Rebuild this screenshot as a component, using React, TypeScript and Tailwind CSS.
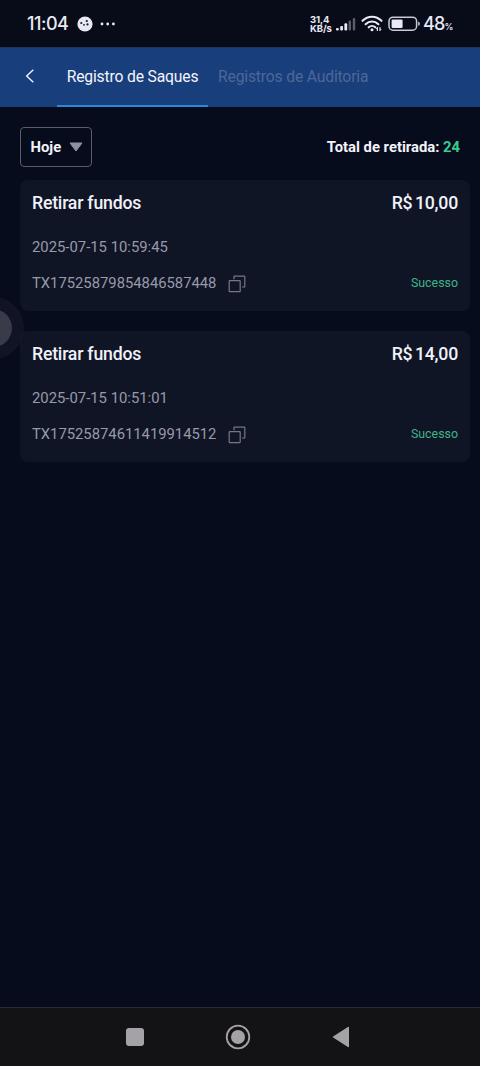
const withdrawals = [
  {
    id: "TX17525879854846587448",
    date: "2025-07-15 10:59:45",
    amount: "10,00",
    status: "Sucesso",
  },
  {
    id: "TX17525874611419914512",
    date: "2025-07-15 10:51:01",
    amount: "14,00",
    status: "Sucesso",
  },
];

function StatusBar() {
  return (
    <div className="flex h-[47px] items-center bg-[#080b18] pl-[27px] pr-[27px] font-['Inter',sans-serif] text-[#e9e9f4]">
      <span className="w-[50px] text-[18px] leading-none font-medium tracking-[-0.5px] whitespace-nowrap">
        11:04
      </span>
      <svg width="16" height="16" viewBox="0 0 16 16">
        <circle cx="8" cy="8" r="7.6" fill="#e9e9f4" />
        <g fill="#151725">
          <circle cx="4.3" cy="7" r="1.1" />
          <circle cx="9.8" cy="5" r="1.1" />
          <circle cx="7" cy="8.8" r="0.9" />
          <circle cx="10.5" cy="8.4" r="1.1" />
        </g>
      </svg>
      <svg className="ml-[6.5px]" width="16" height="4" viewBox="0 0 16 4" fill="#e9e9f4">
        <circle cx="2" cy="2" r="1.4" />
        <circle cx="7.7" cy="2" r="1.4" />
        <circle cx="13.4" cy="2" r="1.4" />
      </svg>
      <div className="ml-auto flex items-center">
        <div className="w-[25px] text-[9.5px] leading-[9px] font-bold tracking-[-0.1px] whitespace-nowrap">
          <div>31,4</div>
          <div>KB/s</div>
        </div>
        <svg width="21" height="14" viewBox="0 0 21 14" fill="#e9e9f4">
          <rect x="1" y="11" width="2.8" height="2.5" rx="1" />
          <rect x="5.2" y="9" width="2.8" height="4.5" rx="1" />
          <rect x="9.4" y="6.2" width="2.8" height="7.3" rx="1" />
          <rect x="13.6" y="3.5" width="2.4" height="10" rx="1" fill="#5b5d6b" />
          <rect x="17.8" y="1" width="2.4" height="12.5" rx="1" fill="#5b5d6b" />
        </svg>
        <svg
          className="ml-[5px]"
          width="22"
          height="17"
          viewBox="0 0 22 17"
          fill="none"
          stroke="#e9e9f4"
          strokeWidth="2.1"
          strokeLinecap="round"
        >
          <path d="M1.5 5.8C7 .3 15 .3 20.5 5.8" />
          <path d="M4.6 9.2c3.7-3.7 9.1-3.7 12.8 0" />
          <path d="M7.7 12.3c1.9-1.8 4.7-1.8 6.6 0" />
          <circle cx="11" cy="14.8" r="1.5" fill="#e9e9f4" stroke="none" />
          <path d="M16.4 12.7v2.8M19 12.5v2.8" strokeWidth="1.2" />
          <path d="M15.4 13.7l1-1M20 14.3l-1 1" strokeWidth="1" />
        </svg>
        <svg className="ml-[5px]" width="33" height="16" viewBox="0 0 33 16">
          <rect x="1" y="1.2" width="27.6" height="13" rx="4" fill="none" stroke="#c9cad6" strokeWidth="1.5" />
          <rect x="3.6" y="3.5" width="11" height="8.4" rx="1.2" fill="#e9e9f4" />
          <path d="M30.2 5.7q1.7 0 1.7 2t-1.7 2z" fill="#c9cad6" />
        </svg>
        <div className="ml-[2px] w-[30px] leading-none font-medium whitespace-nowrap">
          <span className="text-[18px] tracking-[-0.8px]">48</span>
          <span className="text-[9px]">%</span>
        </div>
      </div>
    </div>
  );
}

function Header() {
  return (
    <div className="flex h-[59px] bg-[#193e7c] text-[15.7px] tracking-[-0.17px] shadow-[0_-1px_0_#25315f]">
      <div className="flex w-[57px] items-center pb-[3px] pl-[25px]">
        <svg
          width="10"
          height="14"
          viewBox="0 0 10 14"
          fill="none"
          stroke="#f3f5fb"
          strokeWidth="1.4"
        >
          <path d="M8.3 .8 1.7 7l6.6 6.2" />
        </svg>
      </div>
      <div className="flex w-[151px] items-center justify-center border-b-2 border-[#2f86dc] whitespace-nowrap text-[#f3f5fb]">
        Registro de Saques
      </div>
      <div className="flex items-center pb-[2px] pl-[10px] whitespace-nowrap text-[#4e6797]">
        Registros de Auditoria
      </div>
    </div>
  );
}

function CopyIcon() {
  return (
    <svg
      className="mt-[2px]"
      width="18"
      height="18"
      viewBox="0 0 18 18"
      fill="none"
      stroke="#747786"
      strokeWidth="1.2"
      strokeLinejoin="round"
    >
      <rect x="1.2" y="5.6" width="11" height="11" rx="0.7" />
      <path d="M6 4.2V1.8q0-.6.6-.6H16.2q.6 0 .6.6v9.6q0 .6-.6.6H14" />
    </svg>
  );
}

export default function App() {
  return (
    <div className="relative flex h-[1066px] w-[480px] flex-col overflow-hidden bg-[#070c1d] font-['Roboto',sans-serif]">
      <StatusBar />
      <div className="h-px bg-[#04060d]" />
      <Header />

      <div className="flex-1 pt-5 pr-[10px] pl-5">
        <div className="flex h-10 items-center justify-between pr-[10px] text-[14.8px] font-bold text-[#f3f3fa]">
          <div className="flex h-10 w-[72px] items-center rounded-[4px] border border-[#5b5d6b] pl-[9.5px]">
            <span className="w-[38.5px]">Hoje</span>
            <svg width="14" height="10" viewBox="0 0 14 10">
              <path
                d="M1 1h12L7 9z"
                fill="#8d8fa3"
                stroke="#8d8fa3"
                strokeWidth="1"
                strokeLinejoin="round"
              />
            </svg>
          </div>
          <div className="whitespace-nowrap">
            Total de retirada: <span className="text-[#3ccb8d]">24</span>
          </div>
        </div>

        <div className="mt-[13px] flex flex-col gap-5">
          {withdrawals.map((item) => (
            <div
              key={item.id}
              className="h-[131px] rounded-[8px] bg-[#101526] px-3 pt-[11px]"
            >
              <div className="flex h-6 items-center justify-between text-[17.7px] font-medium tracking-[-0.22px] text-[#f1f1f8]">
                <span>Retirar fundos</span>
                <span className="flex gap-[2.5px]">
                  <span>R$</span>
                  <span>{item.amount}</span>
                </span>
              </div>
              <div className="mt-5 h-6 text-[14.85px] leading-6 text-[#989aa9]">
                {item.date}
              </div>
              <div className="mt-3 flex h-6 items-center justify-between">
                <div className="flex items-center gap-3 text-[14.8px] text-[#989aa9]">
                  <span>{item.id}</span>
                  <CopyIcon />
                </div>
                <span className="pt-px text-[12.4px] text-[#3fb486]">
                  {item.status}
                </span>
              </div>
            </div>
          ))}
        </div>
      </div>

      {/* floating assistive button, docked to the left edge */}
      <div className="absolute top-[297px] -left-[38px] flex h-[62px] w-[62px] items-center justify-center rounded-full bg-[#171b2b]/60">
        <div className="h-[38px] w-[38px] rounded-full bg-[#393b48]" />
      </div>

      <div className="flex h-[59px] items-center border-t border-[#292b36] bg-[#131215] pb-px pl-[126px]">
        <div className="h-[18px] w-[18px] rounded-[3px] bg-[#a5a2a7]" />
        <svg className="ml-[81px]" width="26" height="26" viewBox="0 0 26 26">
          <circle cx="13" cy="13" r="11.3" fill="none" stroke="#a5a2a7" strokeWidth="1.8" />
          <circle cx="13" cy="13" r="7" fill="#a5a2a7" />
        </svg>
        <svg className="ml-[81px]" width="18" height="22" viewBox="0 0 18 22">
          <path
            d="M16.3 1.5v19L1.5 11z"
            fill="#a5a2a7"
            stroke="#a5a2a7"
            strokeWidth="1.4"
            strokeLinejoin="round"
          />
        </svg>
      </div>
    </div>
  );
}
